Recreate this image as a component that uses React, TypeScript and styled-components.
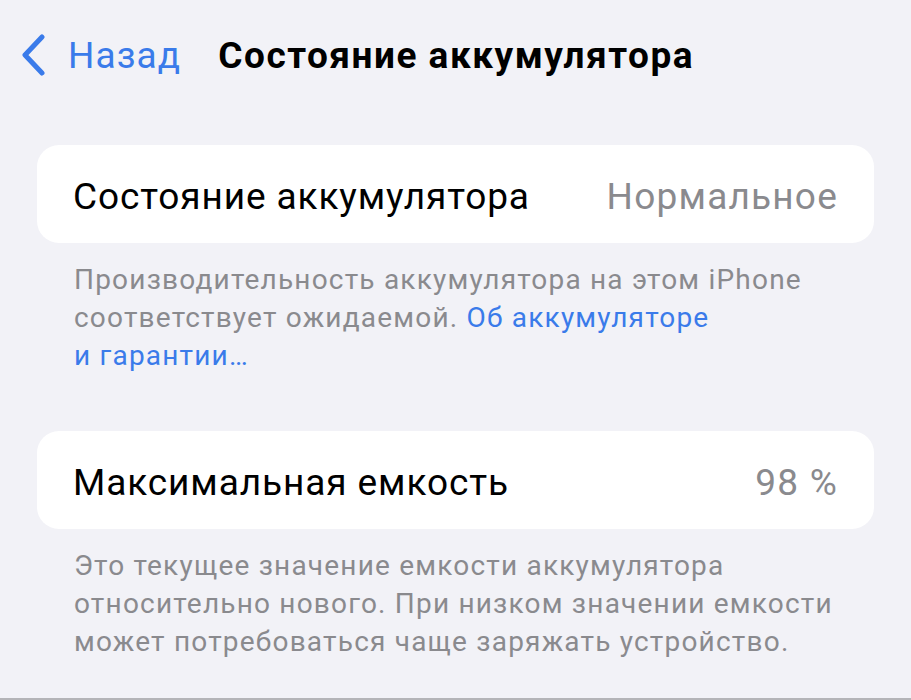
import React from "react";
import styled, { createGlobalStyle } from "styled-components";

const GlobalStyle = createGlobalStyle`
  html, body {
    margin: 0;
    padding: 0;
    background: #f2f2f7;
  }
  body {
    font-family: Roboto, "Noto Sans", sans-serif;
    -webkit-font-smoothing: antialiased;
  }
`;

const Page = styled.div`
  width: 911px;
  height: 700px;
  box-sizing: border-box;
  background: #f2f2f7;
  border-bottom: 2px solid #b4b4b8;
  overflow: hidden;
`;

const NavBar = styled.div`
  display: flex;
  align-items: center;
  height: 91px;
  padding: 19px 0 0 20px;
  box-sizing: border-box;
`;

const BackButton = styled.div`
  display: flex;
  align-items: center;
  gap: 22px;
  color: #3a7bea;
  font-size: 37px;
  letter-spacing: 1.1px;
`;

const Title = styled.h1`
  margin: 0 0 0 37px;
  font-size: 37px;
  font-weight: 700;
  color: #000;
  letter-spacing: 1.5px;
`;

const Content = styled.div`
  padding: 54px 37px 0 37px;
`;

const Card = styled.div`
  display: flex;
  align-items: center;
  justify-content: space-between;
  height: 98px;
  padding: 0 36px;
  background: #fff;
  border-radius: 22px;
`;

const Label = styled.span`
  font-size: 37px;
  color: #000;
  letter-spacing: 0.9px;
  padding-top: 4px;
`;

const Value = styled.span`
  font-size: 37px;
  color: #8a8a8e;
  letter-spacing: 1.2px;
  padding-top: 4px;
`;

const Footer = styled.p<{ $last?: boolean }>`
  margin: 0 0 ${(p) => (p.$last ? 0 : "56px")} 0;
  padding: 18px 0 0 37px;
  font-size: 28px;
  line-height: 38px;
  color: #8a8a8e;
  letter-spacing: 1.2px;
  white-space: nowrap;
`;

const Link = styled.span`
  color: #3a7bea;
`;

const Chevron = () => (
  <svg width="26" height="42" viewBox="0 0 26 42" fill="none">
    <path
      d="M22 3 L5 21 L22 39"
      stroke="#3a7bea"
      strokeWidth="5"
      strokeLinecap="round"
      strokeLinejoin="round"
    />
  </svg>
);

const App: React.FC = () => {
  return (
    <>
      <GlobalStyle />
      <Page>
        <NavBar>
          <BackButton>
            <Chevron />
            <span>Назад</span>
          </BackButton>
          <Title>Состояние аккумулятора</Title>
        </NavBar>
        <Content>
          <Card>
            <Label>Состояние аккумулятора</Label>
            <Value>Нормальное</Value>
          </Card>
          <Footer>
            Производительность аккумулятора на этом iPhone
            <br />
            соответствует ожидаемой. <Link>Об аккумуляторе</Link>
            <br />
            <Link>и гарантии…</Link>
          </Footer>
          <Card>
            <Label>Максимальная емкость</Label>
            <Value>98 %</Value>
          </Card>
          <Footer $last>
            Это текущее значение емкости аккумулятора
            <br />
            относительно нового. При низком значении емкости
            <br />
            может потребоваться чаще заряжать устройство.
          </Footer>
        </Content>
      </Page>
    </>
  );
};

export default App;
